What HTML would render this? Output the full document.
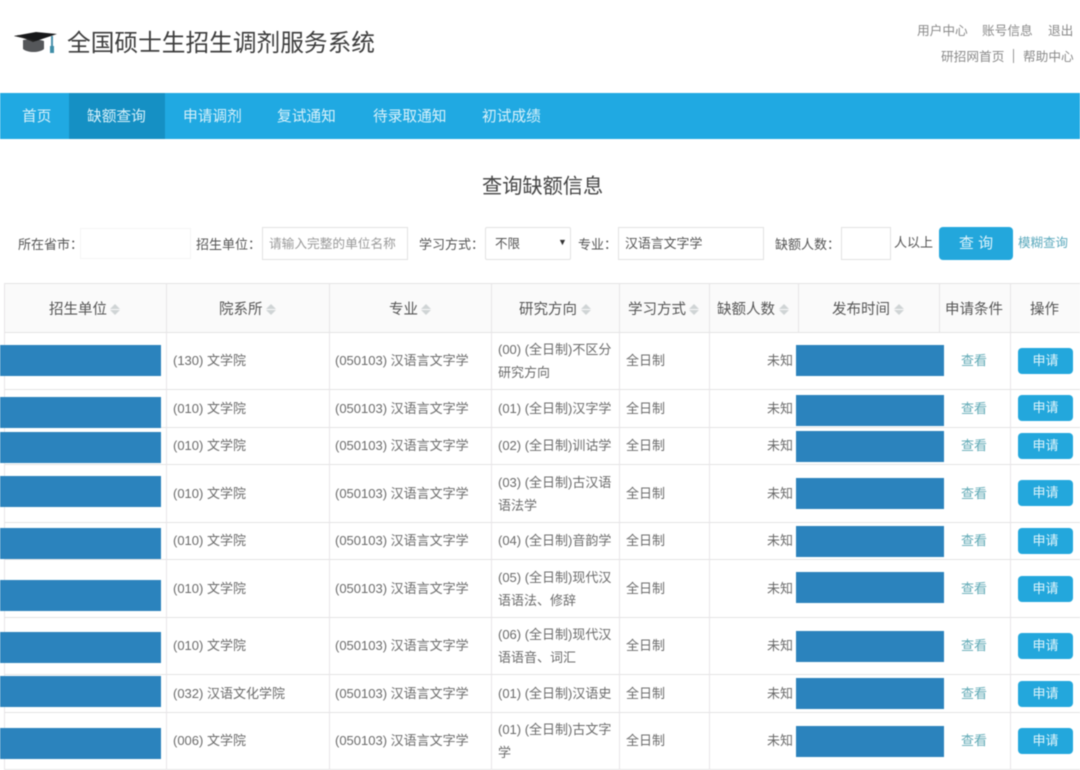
<!DOCTYPE html>
<html lang="zh-CN">
<head>
<meta charset="utf-8">
<title>全国硕士生招生调剂服务系统</title>
<style>
html,body{margin:0;padding:0;background:#fff}
#p{position:relative;width:1080px;height:770px;overflow:hidden;background:#fff;font-family:"Liberation Sans","Noto Sans CJK SC",sans-serif;color:#666;font-size:13px;filter:blur(.55px)}
#p div,#p svg{position:absolute}
.t{white-space:nowrap;line-height:18px;height:18px}
.top{font-size:12.7px;color:#8a8a8a}
.nav{top:108px;color:#d8f1fa;font-size:14.7px}
.lbl{top:235px;color:#555;font-size:13px}
.q{font-family:"Noto Sans CJK TC",sans-serif}
.box{box-sizing:border-box;border:1px solid #e2e2e2;background:#fff;top:227px;height:33px}
.vl{width:1px;background:#e8e5e8}
.hl{height:1px;left:4px;width:1076px;background:#e4e4e4}
.th{top:301px;color:#555;font-size:14.5px}
.s{top:304px;width:10px;height:11px}
.s::before,.s::after{content:"";position:absolute;left:0;border-left:5px solid transparent;border-right:5px solid transparent}
.s::before{top:0;border-bottom:5px solid #cfd4d5}
.s::after{bottom:0;border-top:5px solid #cfd4d5}
.c{color:#6b6b6b;font-size:13px;margin-top:1px}
.u{background:#2b83bd;height:31px}
.k{left:961px;color:#5fa9b5;font-size:13px;margin-top:1px}
.b{left:1018px;width:55px;height:26px;background:#23a7dc;border-radius:4px;color:#e4f6fb;font-size:13px;text-align:center;line-height:26px}
</style>
</head>
<body>
<div id="p">
<!-- logo -->
<svg style="left:13px;top:29px" width="46" height="26" viewBox="0 0 46 26">
<path d="M10 11 C16 10 26 10 31 12 L31 20 C26 24 15 24 10 20Z" fill="#55575a"/>
<path d="M1 7 L23 3 L44 5 L23 12 Z" fill="#17181a"/>
<path d="M1 7 C8 8 16 11 20 13 L23 12 L6 6Z" fill="#222"/>
<rect x="38" y="7" width="2" height="15" fill="#4a92ad"/>
<rect x="37" y="17" width="4" height="7" fill="#3f8ea8"/>
</svg>
<div class="t" style="left:67px;top:29px;height:30px;line-height:30px;font-size:23.7px;color:#3d3d3d">全国硕士生招生调剂服务系统</div>
<div class="t top" style="left:917px;top:22px">用户中心</div>
<div class="t top" style="left:982px;top:22px">账号信息</div>
<div class="t top" style="left:1048px;top:22px">退出</div>
<div class="t top" style="left:941px;top:48px">研招网首页</div>
<div style="left:1013px;top:49px;width:1px;height:14px;background:#999"></div>
<div class="t top" style="left:1023px;top:48px">帮助中心</div>

<!-- nav -->
<div style="left:0;top:93px;width:1080px;height:46px;background:#20a9e2"></div>
<div style="left:69px;top:93px;width:96px;height:46px;background:#1590c4"></div>
<div class="t nav" style="left:22px">首页</div>
<div class="t nav" style="left:87px">缺额查询</div>
<div class="t nav" style="left:183px">申请调剂</div>
<div class="t nav" style="left:277px">复试通知</div>
<div class="t nav" style="left:373px">待录取通知</div>
<div class="t nav" style="left:482px">初试成绩</div>

<div class="t" style="left:482px;top:174px;height:26px;line-height:26px;font-size:20.2px;color:#444">查询缺额信息</div>

<!-- filters -->
<div class="t lbl" style="left:18px">所在省市<span class="q">：</span></div>
<div class="box" style="left:80px;top:228px;width:111px;height:31px;border-color:#f5f5f5"></div>
<div class="t lbl" style="left:196px">招生单位<span class="q">：</span></div>
<div class="box" style="left:262px;width:146px"></div>
<div class="t" style="left:269px;top:235px;font-size:12.7px;color:#9a9a9a">请输入完整的单位名称</div>
<div class="t lbl" style="left:419px">学习方式<span class="q">：</span></div>
<div class="box" style="left:485px;width:86px;border-radius:2px"></div>
<div class="t" style="left:495px;top:235px;font-size:12.5px;color:#555">不限</div>
<div class="t" style="left:558px;top:233px;font-size:9px;color:#333">▼</div>
<div class="t lbl" style="left:578px">专业<span class="q">：</span></div>
<div class="box" style="left:618px;width:146px"></div>
<div class="t" style="left:625px;top:235px;font-size:12.9px;color:#555">汉语言文字学</div>
<div class="t lbl" style="left:775px">缺额人数<span class="q">：</span></div>
<div class="box" style="left:841px;width:50px"></div>
<div class="t lbl" style="left:894px;top:234px">人以上</div>
<div style="left:939px;top:227px;width:74px;height:33px;background:#23a7dc;border-radius:4px;color:#dff4fb;font-size:15px;line-height:33px;text-align:center">查 询</div>
<div class="t" style="left:1018px;top:234px;font-size:12.5px;color:#5ba9bd">模糊查询</div>

<!-- table -->
<div style="left:4px;top:283px;width:1076px;height:49px;background:#fafafa"></div>
<div class="hl" style="top:283px"></div>
<div class="hl" style="top:332px"></div>
<div class="hl" style="top:389px"></div>
<div class="hl" style="top:427px"></div>
<div class="hl" style="top:464px"></div>
<div class="hl" style="top:522px"></div>
<div class="hl" style="top:559px"></div>
<div class="hl" style="top:617px"></div>
<div class="hl" style="top:674px"></div>
<div class="hl" style="top:712px"></div>
<div class="hl" style="top:769px"></div>
<div class="vl" style="left:4px;top:283px;height:487px"></div>
<div class="vl" style="left:166px;top:283px;height:487px"></div>
<div class="vl" style="left:329px;top:283px;height:487px"></div>
<div class="vl" style="left:491px;top:283px;height:487px"></div>
<div class="vl" style="left:619px;top:283px;height:487px"></div>
<div class="vl" style="left:709px;top:283px;height:487px"></div>
<div class="vl" style="left:798px;top:283px;height:49px"></div>
<div class="vl" style="left:939px;top:283px;height:49px"></div>
<div class="vl" style="left:1010px;top:283px;height:487px"></div>

<div class="t th" style="left:49px">招生单位</div><div class="s" style="left:110px"></div>
<div class="t th" style="left:219px">院系所</div><div class="s" style="left:266px"></div>
<div class="t th" style="left:389px">专业</div><div class="s" style="left:421px"></div>
<div class="t th" style="left:519px">研究方向</div><div class="s" style="left:581px"></div>
<div class="t th" style="left:628px">学习方式</div><div class="s" style="left:689px"></div>
<div class="t th" style="left:717px">缺额人数</div><div class="s" style="left:779px"></div>
<div class="t th" style="left:832px">发布时间</div><div class="s" style="left:894px"></div>
<div class="t th" style="left:945px">申请条件</div>
<div class="t th" style="left:1030px">操作</div>

<!-- row 1 -->
<div class="u" style="left:0;top:345px;width:161px"></div>
<div class="t c" style="left:173px;top:351px">(130) 文学院</div>
<div class="t c" style="left:335px;top:351px">(050103) 汉语言文字学</div>
<div class="t c" style="left:498px;top:340px">(00) (全日制)不区分</div>
<div class="t c" style="left:498px;top:363px">研究方向</div>
<div class="t c" style="left:626px;top:351px">全日制</div>
<div class="t c" style="left:767px;top:351px">未知</div>
<div class="u" style="left:796px;top:345px;width:148px"></div>
<div class="t k" style="top:351px">查看</div>
<div class="b" style="top:348px">申请</div>
<!-- row 2 -->
<div class="u" style="left:0;top:397px;width:161px"></div>
<div class="t c" style="left:173px;top:399px">(010) 文学院</div>
<div class="t c" style="left:335px;top:399px">(050103) 汉语言文字学</div>
<div class="t c" style="left:498px;top:399px">(01) (全日制)汉字学</div>
<div class="t c" style="left:626px;top:399px">全日制</div>
<div class="t c" style="left:767px;top:399px">未知</div>
<div class="u" style="left:796px;top:395px;width:148px"></div>
<div class="t k" style="top:399px">查看</div>
<div class="b" style="top:395px">申请</div>
<!-- row 3 -->
<div class="u" style="left:0;top:432px;width:161px"></div>
<div class="t c" style="left:173px;top:436px">(010) 文学院</div>
<div class="t c" style="left:335px;top:436px">(050103) 汉语言文字学</div>
<div class="t c" style="left:498px;top:436px">(02) (全日制)训诂学</div>
<div class="t c" style="left:626px;top:436px">全日制</div>
<div class="t c" style="left:767px;top:436px">未知</div>
<div class="u" style="left:796px;top:431px;width:148px"></div>
<div class="t k" style="top:436px">查看</div>
<div class="b" style="top:433px">申请</div>
<!-- row 4 -->
<div class="u" style="left:0;top:476px;width:161px"></div>
<div class="t c" style="left:173px;top:484px">(010) 文学院</div>
<div class="t c" style="left:335px;top:484px">(050103) 汉语言文字学</div>
<div class="t c" style="left:498px;top:473px">(03) (全日制)古汉语</div>
<div class="t c" style="left:498px;top:496px">语法学</div>
<div class="t c" style="left:626px;top:484px">全日制</div>
<div class="t c" style="left:767px;top:484px">未知</div>
<div class="u" style="left:796px;top:478px;width:148px"></div>
<div class="t k" style="top:484px">查看</div>
<div class="b" style="top:480px">申请</div>
<!-- row 5 -->
<div class="u" style="left:0;top:528px;width:161px"></div>
<div class="t c" style="left:173px;top:531px">(010) 文学院</div>
<div class="t c" style="left:335px;top:531px">(050103) 汉语言文字学</div>
<div class="t c" style="left:498px;top:531px">(04) (全日制)音韵学</div>
<div class="t c" style="left:626px;top:531px">全日制</div>
<div class="t c" style="left:767px;top:531px">未知</div>
<div class="u" style="left:796px;top:526px;width:148px"></div>
<div class="t k" style="top:531px">查看</div>
<div class="b" style="top:528px">申请</div>
<!-- row 6 -->
<div class="u" style="left:0;top:580px;width:161px"></div>
<div class="t c" style="left:173px;top:579px">(010) 文学院</div>
<div class="t c" style="left:335px;top:579px">(050103) 汉语言文字学</div>
<div class="t c" style="left:498px;top:568px">(05) (全日制)现代汉</div>
<div class="t c" style="left:498px;top:591px">语语法、修辞</div>
<div class="t c" style="left:626px;top:579px">全日制</div>
<div class="t c" style="left:767px;top:579px">未知</div>
<div class="u" style="left:796px;top:572px;width:148px"></div>
<div class="t k" style="top:579px">查看</div>
<div class="b" style="top:576px">申请</div>
<!-- row 7 -->
<div class="u" style="left:0;top:632px;width:161px"></div>
<div class="t c" style="left:173px;top:636px">(010) 文学院</div>
<div class="t c" style="left:335px;top:636px">(050103) 汉语言文字学</div>
<div class="t c" style="left:498px;top:625px">(06) (全日制)现代汉</div>
<div class="t c" style="left:498px;top:648px">语语音、词汇</div>
<div class="t c" style="left:626px;top:636px">全日制</div>
<div class="t c" style="left:767px;top:636px">未知</div>
<div class="u" style="left:796px;top:631px;width:148px"></div>
<div class="t k" style="top:636px">查看</div>
<div class="b" style="top:633px">申请</div>
<!-- row 8 -->
<div class="u" style="left:0;top:676px;width:161px"></div>
<div class="t c" style="left:173px;top:684px">(032) 汉语文化学院</div>
<div class="t c" style="left:335px;top:684px">(050103) 汉语言文字学</div>
<div class="t c" style="left:498px;top:684px">(01) (全日制)汉语史</div>
<div class="t c" style="left:626px;top:684px">全日制</div>
<div class="t c" style="left:767px;top:684px">未知</div>
<div class="u" style="left:796px;top:678px;width:148px"></div>
<div class="t k" style="top:684px">查看</div>
<div class="b" style="top:681px">申请</div>
<!-- row 9 -->
<div class="u" style="left:0;top:728px;width:161px"></div>
<div class="t c" style="left:173px;top:731px">(006) 文学院</div>
<div class="t c" style="left:335px;top:731px">(050103) 汉语言文字学</div>
<div class="t c" style="left:498px;top:720px">(01) (全日制)古文字</div>
<div class="t c" style="left:498px;top:743px">学</div>
<div class="t c" style="left:626px;top:731px">全日制</div>
<div class="t c" style="left:767px;top:731px">未知</div>
<div class="u" style="left:796px;top:726px;width:148px"></div>
<div class="t k" style="top:731px">查看</div>
<div class="b" style="top:728px">申请</div>
</div>
</body>
</html>
